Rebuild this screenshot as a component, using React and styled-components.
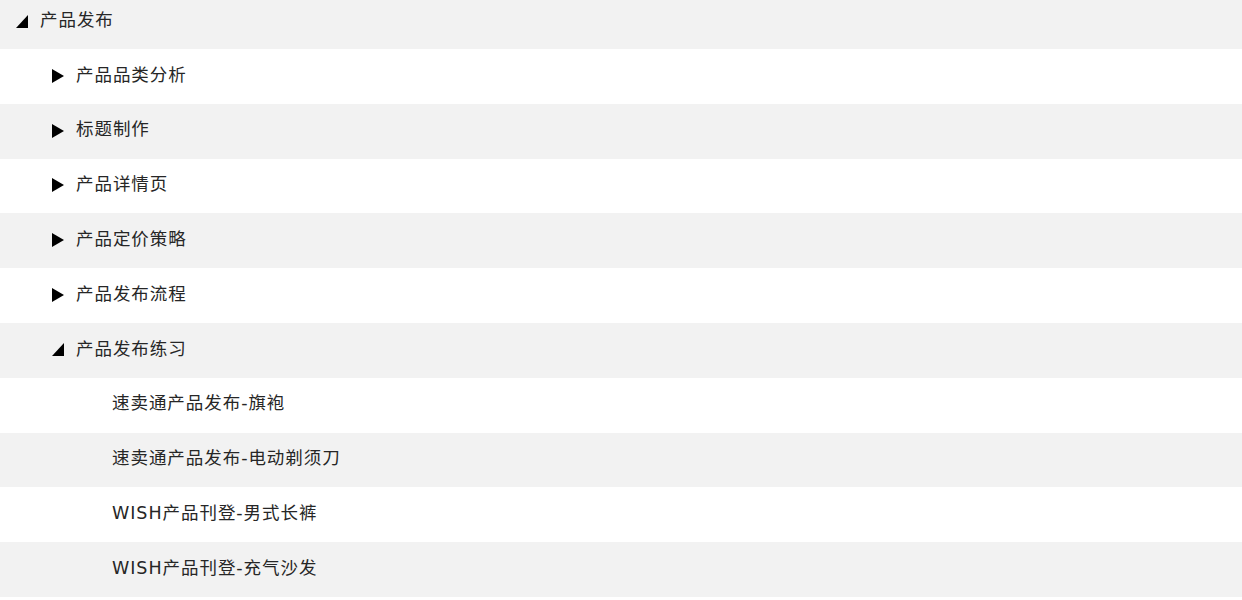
import { useState } from "react";
import styled, { createGlobalStyle } from "styled-components";

const GlobalStyle = createGlobalStyle`
  html, body {
    margin: 0;
    padding: 0;
    background: #ffffff;
    overflow: hidden;
  }
  body {
    font-family: "DejaVu Sans", "Noto Sans CJK SC", "Noto Sans", sans-serif;
  }
`;

const treeData = [
  {
    id: "publish",
    label: "产品发布",
    open: true,
    children: [
      { id: "c1", label: "产品品类分析", children: [{ id: "c1a", label: "" }] },
      { id: "c2", label: "标题制作", children: [{ id: "c2a", label: "" }] },
      { id: "c3", label: "产品详情页", children: [{ id: "c3a", label: "" }] },
      { id: "c4", label: "产品定价策略", children: [{ id: "c4a", label: "" }] },
      { id: "c5", label: "产品发布流程", children: [{ id: "c5a", label: "" }] },
      {
        id: "c6",
        label: "产品发布练习",
        open: true,
        children: [
          { id: "p1", label: "速卖通产品发布-旗袍" },
          { id: "p2", label: "速卖通产品发布-电动剃须刀" },
          { id: "p3", label: "WISH产品刊登-男式长裤" },
          { id: "p4", label: "WISH产品刊登-充气沙发" },
        ],
      },
    ],
  },
];

const collectOpen = (nodes, acc = {}) => {
  nodes.forEach((n) => {
    if (n.open) acc[n.id] = true;
    if (n.children) collectOpen(n.children, acc);
  });
  return acc;
};

const Arrow = ({ open }) =>
  open ? (
    <svg width="12" height="13" viewBox="0 0 12 13">
      <polygon points="12,0 12,13 0,13" fill="#000" />
    </svg>
  ) : (
    <svg width="12" height="14" viewBox="0 0 12 14">
      <polygon points="0,0 12,7 0,14" fill="#000" />
    </svg>
  );

const Tree = () => {
  const [openMap, setOpenMap] = useState(() => collectOpen(treeData));

  const toggle = (id) => setOpenMap((m) => ({ ...m, [id]: !m[id] }));

  const rows = [];
  const walk = (nodes, level) => {
    nodes.forEach((node) => {
      const hasKids = !!node.children;
      const open = !!openMap[node.id];
      rows.push(
        <Row key={node.id} $level={level} onClick={() => hasKids && toggle(node.id)}>
          <Toggle>{hasKids && <Arrow open={open} />}</Toggle>
          <Label>{node.label}</Label>
        </Row>
      );
      if (hasKids && open) walk(node.children, level + 1);
    });
  };
  walk(treeData, 0);

  return <TreeList>{rows}</TreeList>;
};

const App = () => (
  <>
    <GlobalStyle />
    <Tree />
  </>
);

const TreeList = styled.div`
  margin-top: -5.8px;
  width: 100%;
  & > div:nth-child(odd) {
    background: #f2f2f2;
  }
  & > div:nth-child(even) {
    background: #ffffff;
  }
`;

const Row = styled.div`
  display: flex;
  align-items: center;
  height: 54.8px;
  padding-left: ${(p) => 16 + p.$level * 36}px;
  padding-bottom: 1px;
  cursor: pointer;
  box-sizing: border-box;
`;

const Toggle = styled.span`
  display: inline-flex;
  align-items: center;
  justify-content: flex-start;
  width: 24px;
  height: 14px;
  flex-shrink: 0;
`;

const Label = styled.span`
  font-size: 17.5px;
  letter-spacing: 0.95px;
  color: #262626;
  line-height: 1;
  white-space: nowrap;
  padding-bottom: 1px;
`;

export default App;
